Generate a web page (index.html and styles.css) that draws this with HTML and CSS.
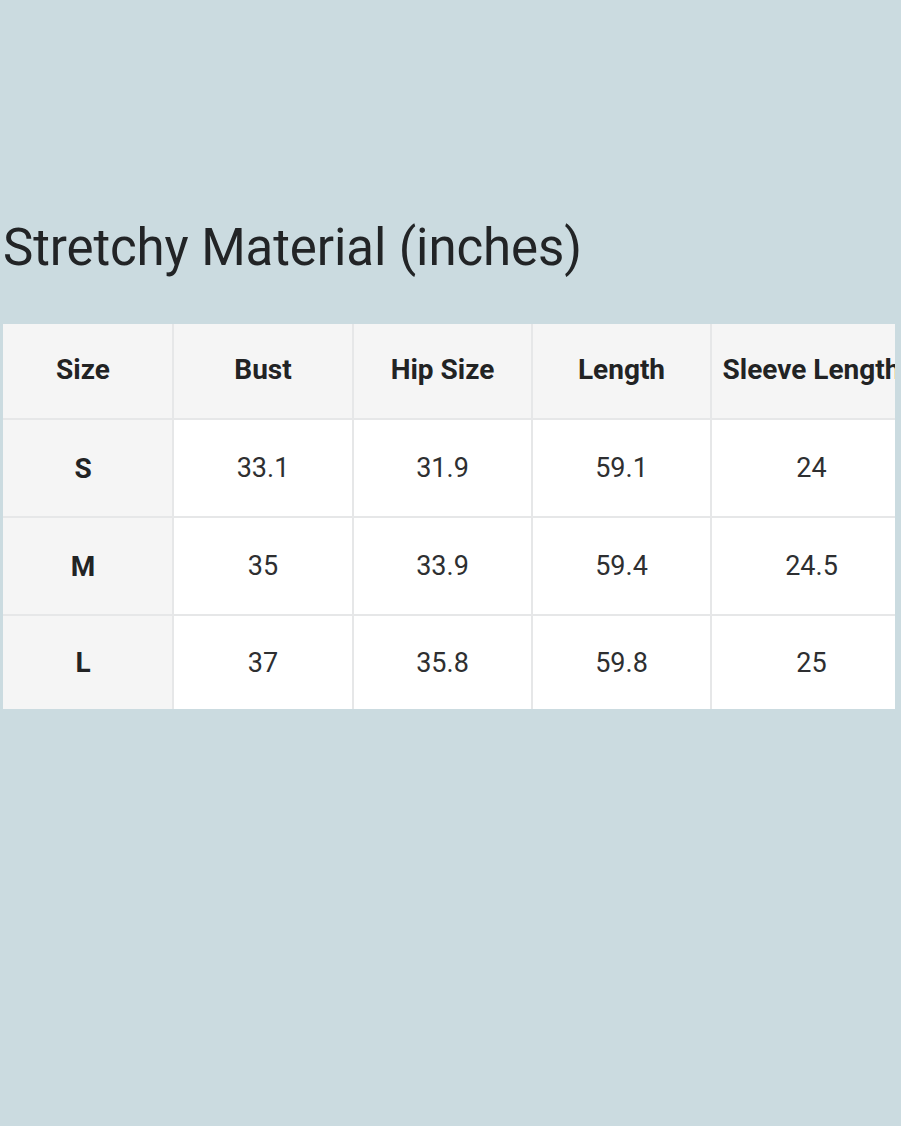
FILE: index.html
```html
<!DOCTYPE html>
<html>
<head>
<meta charset="utf-8">
<link rel="stylesheet" href="styles.css">
</head>
<body>
<main class="page">
  <h1 class="title">Stretchy Material (inches)</h1>
  <div class="table-wrap">
    <table class="size-table">
      <colgroup>
        <col class="c1"><col class="c2"><col class="c3"><col class="c4"><col class="c5">
      </colgroup>
      <thead>
        <tr><th>Size</th><th>Bust</th><th>Hip Size</th><th>Length</th><th>Sleeve Length</th></tr>
      </thead>
      <tbody>
        <tr><th>S</th><td>33.1</td><td>31.9</td><td>59.1</td><td>24</td></tr>
        <tr><th>M</th><td>35</td><td>33.9</td><td>59.4</td><td>24.5</td></tr>
        <tr class="last"><th>L</th><td>37</td><td>35.8</td><td>59.8</td><td>25</td></tr>
      </tbody>
    </table>
  </div>
</main>
</body>
</html>
```

FILE: styles.css
```css
html, body {
  margin: 0;
  padding: 0;
  background: #cbdbe0;
}
body {
  font-family: Roboto, "Liberation Sans", sans-serif;
  width: 901px;
  height: 1126px;
  overflow: hidden;
}
.page {
  padding-top: 214px;
}
.title {
  margin: 0 0 0 3px;
  font-size: 51px;
  font-weight: 400;
  color: #222426;
  line-height: 68px;
  letter-spacing: -0.1px;
}
.table-wrap {
  margin: 42px 0 0 3px;
  width: 892px;
  overflow: hidden;
}
.size-table {
  border-collapse: collapse;
  table-layout: fixed;
  width: 918px;
  margin-left: -9px;
  background: #ffffff;
}
.c1 { width: 179px; }
.c2 { width: 180px; }
.c3 { width: 179px; }
.c4 { width: 179px; }
.c5 { width: 201px; }
.size-table th,
.size-table td {
  border: 2px solid #e6e7e8;
  text-align: center;
  vertical-align: middle;
  font-size: 27px;
  padding: 0;
  white-space: nowrap;
}
.size-table tr:first-child th,
.size-table tr:first-child td { border-top: none; }
.size-table th:first-child { border-left: none; }
.size-table tr.last th,
.size-table tr.last td { border-bottom: none; }
.size-table thead tr { height: 95px; }
.size-table thead th { padding-bottom: 4px; }
.size-table tbody tr { height: 98px; }
.size-table tbody tr.last { height: 94px; }
.size-table th {
  background: #f5f5f5;
  font-weight: 700;
  font-size: 28px;
  color: #222324;
}
.size-table td {
  font-weight: 400;
  color: #2e2f31;
}
```
